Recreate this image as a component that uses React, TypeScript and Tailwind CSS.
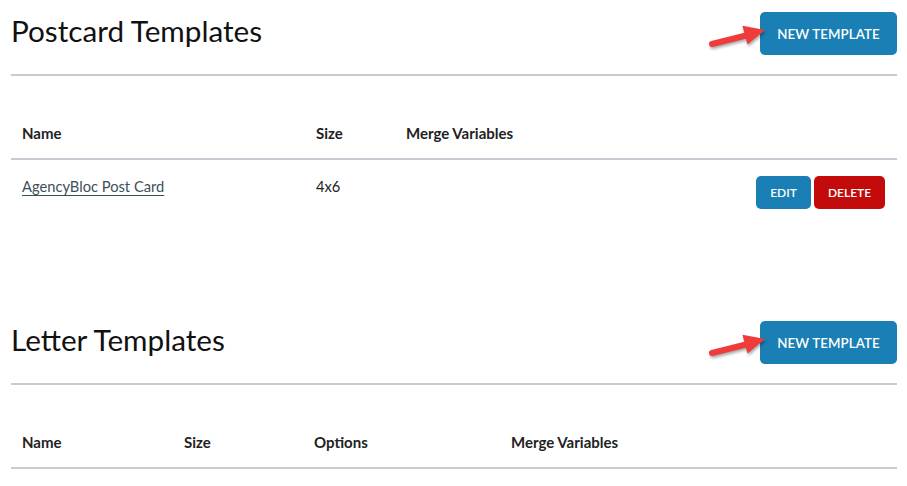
import React from "react";

const font = { fontFamily: "Lato, 'Open Sans', sans-serif" };

function Arrow() {
  return (
    <svg
      className="absolute left-[-52px] top-[10px] pointer-events-none"
      width="62"
      height="32"
      viewBox="0 0 62 32"
      style={{ filter: "drop-shadow(1px 2px 1.5px rgba(0,0,0,0.35))" }}
    >
      <line x1="4" y1="22" x2="40" y2="13" stroke="#f03b3b" strokeWidth="6" strokeLinecap="round" />
      <polygon points="57,8 34.4,3.8 39.5,22.5" fill="#f03b3b" />
    </svg>
  );
}

function Header({ title }: { title: string }) {
  return (
    <div className="flex justify-between items-start h-[74px] border-b-2 border-[#c8ccd2] box-content">
      <h1 className="text-[29.7px] leading-[36px] mt-[13px] text-[#111] font-normal">{title}</h1>
      <div className="relative mt-[12px]">
        <Arrow />
        <button className="h-[43px] w-[137px] pt-[3px] rounded-[5px] bg-[#1a7fb5] text-white text-[13.3px] font-semibold tracking-[0.1px]">
          NEW TEMPLATE
        </button>
      </div>
    </div>
  );
}

export default function App() {
  return (
    <div className="w-[907px] h-[486px] overflow-hidden bg-white pl-[11px] pr-[10px]" style={font}>
      <section className="h-[309px]">
        <Header title="Postcard Templates" />
        <div className="mt-[32px] grid grid-cols-[294px_90px_1fr] h-[50px] items-center border-b-2 border-[#c8ccd2] box-content text-[15px] font-bold text-[#222]">
          <div className="pl-[11px] pt-[1px]">Name</div>
          <div className="pl-[11px] pt-[1px]">Size</div>
          <div className="pl-[11px] pt-[1px]">Merge Variables</div>
        </div>
        <div className="grid grid-cols-[294px_90px_1fr_auto] pt-[16px] text-[14.7px] text-[#222]">
          <div className="pl-[11px] leading-[20px]">
            <a href="#" className="text-[#3d4f5a] underline decoration-[#2c5a3c] underline-offset-[3px]">
              AgencyBloc Post Card
            </a>
          </div>
          <div className="pl-[11px] leading-[20px]">4x6</div>
          <div />
          <div className="flex gap-[3px] pr-[12px]">
            <button className="h-[33px] w-[55px] pt-[1px] rounded-[5px] bg-[#1a7fb5] text-white text-[12px] font-semibold">
              EDIT
            </button>
            <button className="h-[33px] w-[71px] pt-[1px] rounded-[5px] bg-[#c40b0b] text-white text-[12px] font-semibold">
              DELETE
            </button>
          </div>
        </div>
      </section>
      <section>
        <Header title="Letter Templates" />
        <div className="mt-[32px] grid grid-cols-[162px_130px_197px_1fr] h-[50px] items-center border-b-2 border-[#c8ccd2] box-content text-[15px] font-bold text-[#222]">
          <div className="pl-[11px] pt-[1px]">Name</div>
          <div className="pl-[11px] pt-[1px]">Size</div>
          <div className="pl-[11px] pt-[1px]">Options</div>
          <div className="pl-[11px] pt-[1px]">Merge Variables</div>
        </div>
      </section>
    </div>
  );
}
